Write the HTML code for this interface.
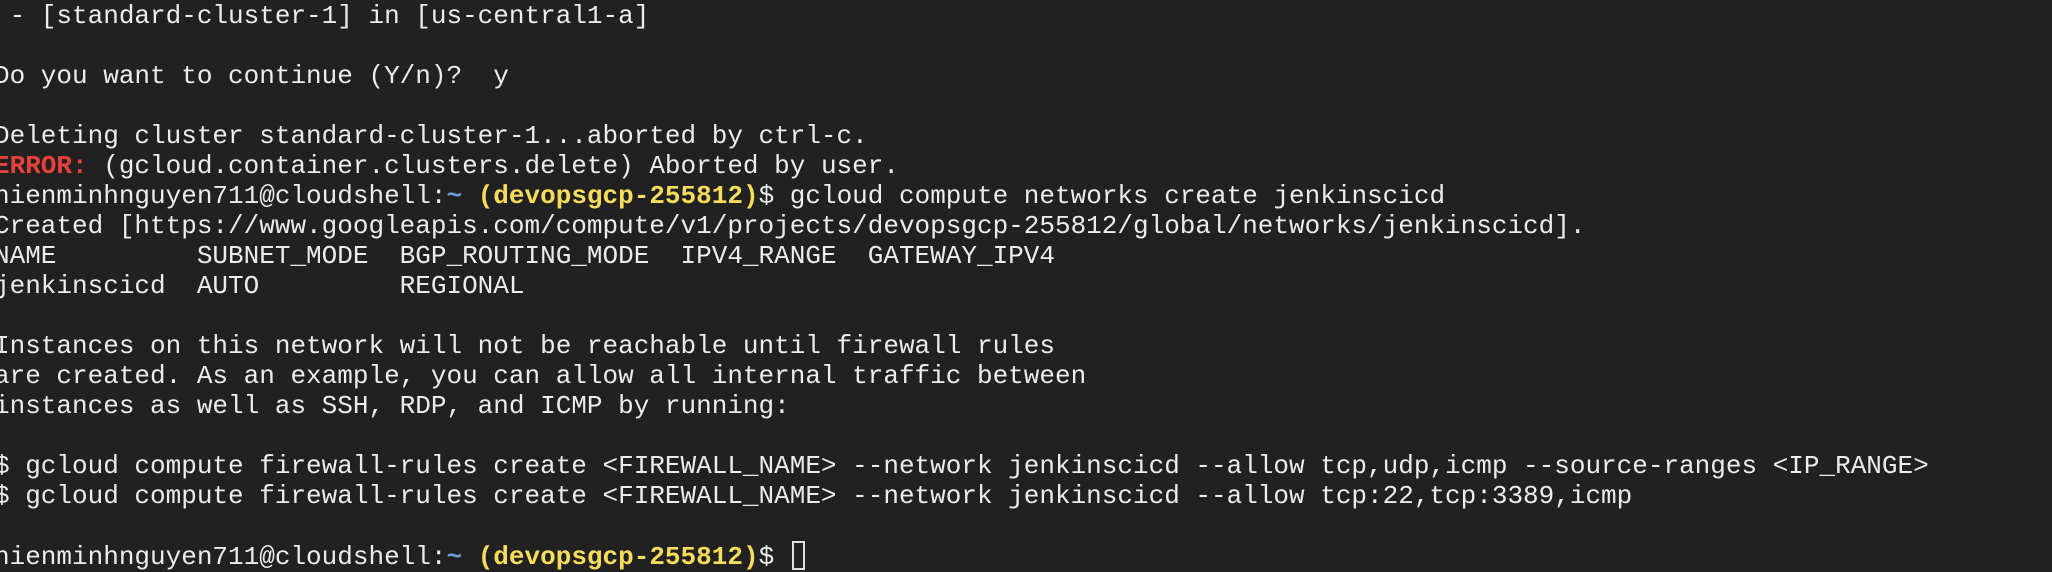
<!DOCTYPE html>
<html><head><meta charset="utf-8"><style>
html,body{margin:0;padding:0;background:#212121;width:2052px;height:566px;overflow:hidden}
pre{position:absolute;left:-6px;top:1px;margin:0;font-family:"Liberation Mono",monospace;font-size:26px;line-height:30px;color:#ececec;white-space:pre}
.r{color:#e8413b;font-weight:bold}
.b{color:#6f9ed6;font-weight:bold}
.y{color:#f7dc5c;font-weight:bold}
.cur{display:inline-block;width:9px;height:25px;border:2px solid #e0e0e0;vertical-align:-6px;margin-left:2px}
</style></head><body><pre> - [standard-cluster-1] in [us-central1-a]

Do you want to continue (Y/n)?  y

Deleting cluster standard-cluster-1...aborted by ctrl-c.
<span class="r">ERROR:</span> (gcloud.container.clusters.delete) Aborted by user.
hienminhnguyen711@cloudshell:<span class="b">~</span> <span class="y">(devopsgcp-255812)</span>$ gcloud compute networks create jenkinscicd
Created [https://www.googleapis.com/compute/v1/projects/devopsgcp-255812/global/networks/jenkinscicd].
NAME         SUBNET_MODE  BGP_ROUTING_MODE  IPV4_RANGE  GATEWAY_IPV4
jenkinscicd  AUTO         REGIONAL

Instances on this network will not be reachable until firewall rules
are created. As an example, you can allow all internal traffic between
instances as well as SSH, RDP, and ICMP by running:

$ gcloud compute firewall-rules create &lt;FIREWALL_NAME&gt; --network jenkinscicd --allow tcp,udp,icmp --source-ranges &lt;IP_RANGE&gt;
$ gcloud compute firewall-rules create &lt;FIREWALL_NAME&gt; --network jenkinscicd --allow tcp:22,tcp:3389,icmp

hienminhnguyen711@cloudshell:<span class="b">~</span> <span class="y">(devopsgcp-255812)</span>$ <span class="cur"></span></pre></body></html>
